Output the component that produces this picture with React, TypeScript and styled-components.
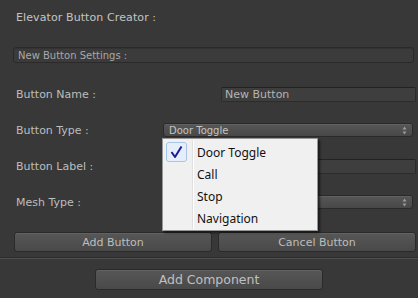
import React from 'react';
import styled, { createGlobalStyle } from 'styled-components';

const GlobalStyle = createGlobalStyle`
  html, body {
    margin: 0;
    padding: 0;
    background: #383838;
  }
  body {
    font-family: "DejaVu Sans", "Liberation Sans", sans-serif;
    color: #bebebe;
  }
`;

const menuItems = ['Door Toggle', 'Call', 'Stop', 'Navigation'];

function Arrows() {
  return (
    <svg width="5" height="9" viewBox="0 0 5 9">
      <path d="M2.5 0.5 L4.5 3.5 L0.5 3.5 Z" fill="#9a9a9a" />
      <path d="M2.5 8.5 L4.5 5.5 L0.5 5.5 Z" fill="#9a9a9a" />
    </svg>
  );
}

function Check() {
  return (
    <svg width="13" height="14" viewBox="0 0 13 14">
      <path d="M1.5 7 L5 12 L11.5 1.5" fill="none" stroke="#1c1c96" strokeWidth="2" strokeLinejoin="round" />
    </svg>
  );
}

function App() {
  return (
    <Page>
      <GlobalStyle />
      <Title>Elevator Button Creator :</Title>
      <SectionBox>New Button Settings :</SectionBox>

      <Fields>
        <Row>
          <Label>Button Name :</Label>
          <TextField>New Button</TextField>
        </Row>
        <Row>
          <Label>Button Type :</Label>
          <Popup>
            <span>Door Toggle</span>
            <Arrows />
            <Menu>
              {menuItems.map((item, i) => (
                <MenuItem key={item}>
                  <CheckCell>{i === 0 && <CheckBox><Check /></CheckBox>}</CheckCell>
                  <MenuText>{item}</MenuText>
                </MenuItem>
              ))}
            </Menu>
          </Popup>
        </Row>
        <Row>
          <Label>Button Label :</Label>
          <TextField />
        </Row>
        <Row>
          <Label>Mesh Type :</Label>
          <Popup>
            <span></span>
            <Arrows />
          </Popup>
        </Row>
      </Fields>

      <ButtonRow>
        <Button>Add Button</Button>
        <Button>Cancel Button</Button>
      </ButtonRow>
      <Divider />
      <Footer>
        <BigButton>Add Component</BigButton>
      </Footer>
    </Page>
  );
}

const Page = styled.div`
  width: 418px;
  height: 298px;
  overflow: hidden;
  display: flex;
  flex-direction: column;
`;

const Title = styled.div`
  height: 34px;
  display: flex;
  align-items: center;
  padding-left: 16px;
  font-size: 11px;
  letter-spacing: 0.1px;
  color: #c4c4c4;
`;

const SectionBox = styled.div`
  margin: 13px 4px 0 13px;
  height: 14px;
  border: 1px solid #2a2a2a;
  border-radius: 3px;
  background: #3b3b3b;
  display: flex;
  align-items: center;
  padding-left: 4px;
  font-size: 10px;
  color: #a9a9a9;
  box-shadow: inset 0 1px 0 #333;
`;

const Fields = styled.div`
  margin-top: 13px;
  display: flex;
  flex-direction: column;
`;

const Row = styled.div`
  height: 36px;
  display: flex;
  align-items: center;
  position: relative;
`;

const Label = styled.div`
  position: absolute;
  left: 16px;
  font-size: 11px;
  color: #bdbdbd;
`;

const TextField = styled.div`
  margin-left: 221px;
  margin-right: 2px;
  flex: 1;
  height: 13px;
  background: #3e3e3e;
  border: 1px solid #2c2c2c;
  border-top-color: #222;
  border-radius: 2px;
  padding-left: 3px;
  display: flex;
  align-items: center;
  font-size: 11px;
  color: #b4b4b4;
`;

const Popup = styled.div`
  position: relative;
  margin-left: 163px;
  margin-right: 5px;
  flex: 1;
  height: 12px;
  border: 1px solid #2a2a2a;
  border-radius: 3px;
  background: linear-gradient(#575757, #484848);
  box-shadow: inset 0 1px 0 #606060;
  display: flex;
  align-items: center;
  justify-content: space-between;
  padding: 0 5px 0 5px;
  font-size: 10px;
  color: #c4c4c4;
`;

const Menu = styled.div`
  position: absolute;
  top: 14px;
  left: -2px;
  width: 154px;
  padding: 2px 0 1px;
  background: #f0f0f0;
  border: 1px solid #979797;
  box-shadow: 2px 2px 2px rgba(0, 0, 0, 0.55);
  z-index: 10;
  &::before {
    content: '';
    position: absolute;
    left: 29px;
    top: 1px;
    bottom: 1px;
    width: 1px;
    background: #e0e0e0;
    box-shadow: 1px 0 0 #fff;
  }
`;

const MenuItem = styled.div`
  height: 22px;
  display: flex;
  align-items: center;
`;

const CheckCell = styled.div`
  width: 34px;
  height: 22px;
  display: flex;
  align-items: center;
  padding-left: 3px;
  box-sizing: border-box;
`;

const CheckBox = styled.div`
  width: 19px;
  height: 18px;
  border: 1px solid #a8c4e6;
  border-radius: 3px;
  background: #e6eefb;
  display: flex;
  align-items: center;
  justify-content: center;
`;

const MenuText = styled.div`
  font-family: "Noto Sans", "Open Sans", sans-serif;
  font-size: 12px;
  color: #111;
`;

const ButtonRow = styled.div`
  margin: 12px 2px 0 14px;
  display: flex;
  gap: 6px;
`;

const Button = styled.div`
  flex: 1;
  height: 18px;
  border: 1px solid #2a2a2a;
  border-radius: 3px;
  background: linear-gradient(#575757, #494949);
  box-shadow: inset 0 1px 0 #626262;
  display: flex;
  align-items: center;
  justify-content: center;
  font-size: 11px;
  color: #bdbdbd;
`;

const Divider = styled.div`
  margin-top: 5px;
  height: 1px;
  background: #4f4f4f;
  border-top: 1px solid #2c2c2c;
`;

const Footer = styled.div`
  margin-top: 10px;
  padding-left: 95px;
  display: flex;
`;

const BigButton = styled(Button)`
  flex: none;
  width: 226px;
  height: 19px;
  font-size: 12.5px;
  color: #c0c0c0;
`;

export default App;
